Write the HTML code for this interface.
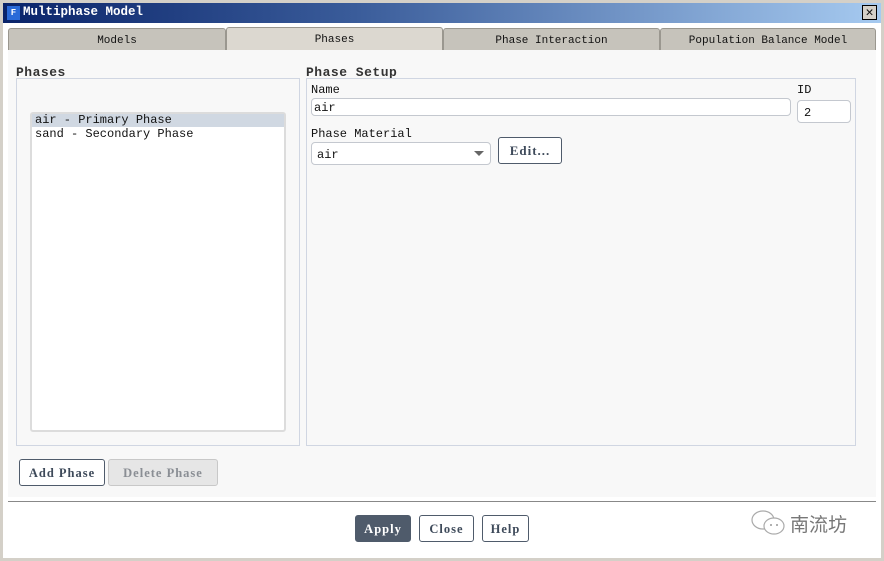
<!DOCTYPE html>
<html><head><style>
*{margin:0;padding:0;box-sizing:border-box}
body{width:884px;height:561px;background:#d4d0c8;position:relative;overflow:hidden;font-family:"Liberation Mono","Noto Sans CJK SC",monospace;font-size:12px;color:#111}
.a{position:absolute}
.tb{left:3px;top:3px;width:878px;height:20px;background:linear-gradient(90deg,#0a246a,#3a5c9a 40%,#a6caf0);}
.win{left:3px;top:23px;width:878px;height:535px;background:#fff}
.tab{top:28px;height:22px;background:#c6c3bb;border:1px solid #9a978f;border-bottom:none;border-radius:3px 3px 0 0;text-align:center;line-height:24px;font-size:11px}
.btn{border:1px solid #4f5b6b;border-radius:3px;background:#fff;text-align:center;font-weight:bold;color:#3e4a5a;font-size:12.5px;font-family:"Liberation Serif","Liberation Mono",serif;letter-spacing:1px}
.grp{border:1px solid #d0d6e2;background:#f8f8f8}
.inp{background:#fff;border:1px solid #c4c8cf;border-radius:4px}
.h{font-weight:bold;font-size:13px;color:#333;letter-spacing:0.5px}
</style></head><body>
<div class="a tb"></div>
<div class="a" style="left:7px;top:6px;width:13px;height:14px;background:#2a6ad8;color:#fff;font-size:9px;font-weight:bold;text-align:center;line-height:14px">F</div>
<div class="a" style="left:23px;top:5px;color:#fff;font-weight:bold;font-size:12.5px">Multiphase Model</div>
<div class="a" style="left:862px;top:5px;width:15px;height:15px;background:#d4d0c8;border:1px solid #000;text-align:center;line-height:13px;font-size:13px">✕</div>
<div class="a win"></div>
<div class="a tab" style="left:8px;width:218px">Models</div>
<div class="a tab" style="left:226px;width:217px;top:27px;height:24px;background:#dcd8d0;line-height:24px">Phases</div>
<div class="a tab" style="left:443px;width:217px">Phase Interaction</div>
<div class="a tab" style="left:660px;width:216px">Population Balance Model</div>
<div class="a" style="left:8px;top:50px;width:868px;height:447px;background:#f8f8f8"></div>
<div class="a h" style="left:16px;top:65px">Phases</div>
<div class="a grp" style="left:16px;top:78px;width:284px;height:368px"></div>
<div class="a" style="left:30px;top:112px;width:256px;height:320px;background:#fff;border:2px solid #dcdcdc;border-radius:3px"></div>
<div class="a" style="left:32px;top:114px;width:252px;height:13px;background:#d0d8e2"></div>
<div class="a" style="left:35px;top:114px;line-height:13.5px">air - Primary Phase<br>sand - Secondary Phase</div>
<div class="a h" style="left:306px;top:65px">Phase Setup</div>
<div class="a grp" style="left:306px;top:78px;width:550px;height:368px"></div>
<div class="a" style="left:311px;top:83px">Name</div>
<div class="a inp" style="left:311px;top:98px;width:480px;height:18px"></div>
<div class="a" style="left:314px;top:101px">air</div>
<div class="a" style="left:797px;top:83px">ID</div>
<div class="a inp" style="left:797px;top:100px;width:54px;height:23px"></div>
<div class="a" style="left:804px;top:106px">2</div>
<div class="a" style="left:311px;top:127px">Phase Material</div>
<div class="a inp" style="left:311px;top:142px;width:180px;height:23px"></div>
<div class="a" style="left:317px;top:148px">air</div>
<div class="a" style="left:474px;top:151px;width:0;height:0;border-left:5px solid transparent;border-right:5px solid transparent;border-top:5px solid #666"></div>
<div class="a btn" style="left:498px;top:137px;width:64px;height:27px;line-height:26px;font-size:13px">Edit...</div>
<div class="a btn" style="left:19px;top:459px;width:86px;height:27px;line-height:26px">Add Phase</div>
<div class="a btn" style="left:108px;top:459px;width:110px;height:27px;line-height:26px;background:#e6e6e6;border-color:#c8c8c8;color:#8a8e94">Delete Phase</div>
<div class="a" style="left:8px;top:501px;width:868px;height:1px;background:#888"></div>
<div class="a btn" style="left:355px;top:515px;width:56px;height:27px;line-height:26px;background:#4f5b6b;color:#fff">Apply</div>
<div class="a btn" style="left:419px;top:515px;width:55px;height:27px;line-height:26px">Close</div>
<div class="a btn" style="left:482px;top:515px;width:47px;height:27px;line-height:26px">Help</div>
<svg class="a" style="left:750px;top:508px" width="38" height="30"><ellipse cx="13" cy="12" rx="11" ry="9" fill="none" stroke="#aaa" stroke-width="1.2"/><ellipse cx="24" cy="18" rx="10" ry="8" fill="#fff" stroke="#aaa" stroke-width="1.2"/><circle cx="21" cy="17" r="1" fill="#999"/><circle cx="27" cy="17" r="1" fill="#999"/></svg>
<div class="a" style="left:790px;top:510px;font-family:'Noto Sans CJK SC',sans-serif;font-size:19px;color:#777">南流坊</div>
</body></html>
